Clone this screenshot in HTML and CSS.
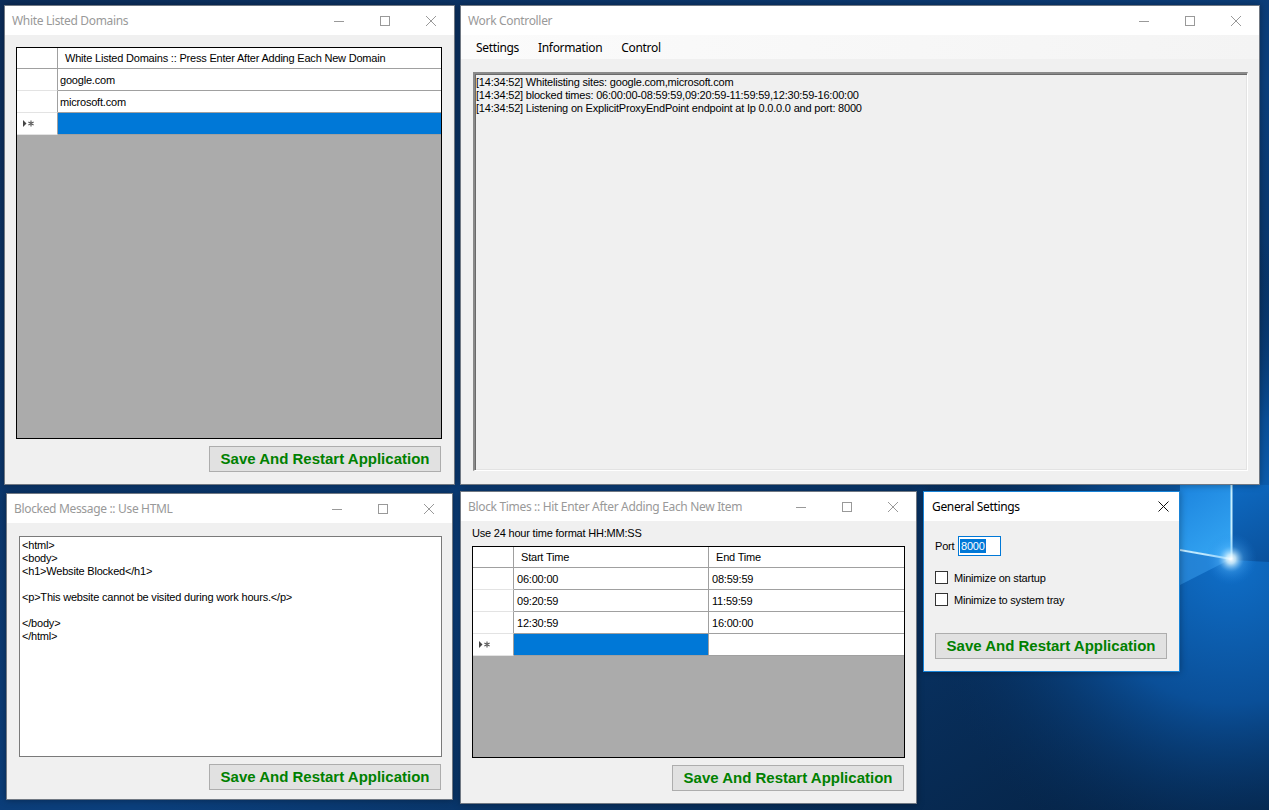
FILE: index.html
```html
<!DOCTYPE html>
<html lang="en">
<head>
<meta charset="utf-8">
<title>Work Controller</title>
<link rel="stylesheet" href="styles.css">
</head>
<body>
<div class="desktop">
  <svg class="wallpaper" width="1269" height="810" viewBox="0 0 1269 810" aria-hidden="true">
    <defs>
      <linearGradient id="bgbase" x1="0" y1="0" x2="1" y2="1">
        <stop offset="0" stop-color="#0c2d5a"/>
        <stop offset="0.55" stop-color="#0b3f7c"/>
        <stop offset="1" stop-color="#05203f"/>
      </linearGradient>
      <radialGradient id="bgglow" cx="1230" cy="560" r="320" gradientUnits="userSpaceOnUse">
        <stop offset="0" stop-color="#0f6fc9"/>
        <stop offset="0.45" stop-color="#0a4f98"/>
        <stop offset="1" stop-color="#062b58" stop-opacity="0"/>
      </radialGradient>
      <linearGradient id="pane1" x1="1180" y1="485" x2="1231" y2="559" gradientUnits="userSpaceOnUse">
        <stop offset="0" stop-color="#1c84de"/>
        <stop offset="1" stop-color="#36a8f4"/>
      </linearGradient>
      <linearGradient id="pane2" x1="1232" y1="485" x2="1269" y2="562" gradientUnits="userSpaceOnUse">
        <stop offset="0" stop-color="#0e6ac2"/>
        <stop offset="1" stop-color="#0a519c"/>
      </linearGradient>
      <radialGradient id="flare" cx="1231" cy="559" r="26" gradientUnits="userSpaceOnUse">
        <stop offset="0" stop-color="#ffffff"/>
        <stop offset="0.18" stop-color="#d6f3ff" stop-opacity="0.85"/>
        <stop offset="0.5" stop-color="#5ab8ff" stop-opacity="0.3"/>
        <stop offset="1" stop-color="#1a7fe0" stop-opacity="0"/>
      </radialGradient>
    </defs>
    <rect width="1269" height="810" fill="url(#bgbase)"/>
    <rect width="1269" height="810" fill="url(#bgglow)"/>
    <polygon points="1180,485 1231,485 1231,559 1180,549" fill="url(#pane1)"/>
    <polygon points="1232,485 1269,485 1269,562 1232,560" fill="url(#pane2)"/>
    <polygon points="1180,551 1231,559 1180,585" fill="#3a9ff0" opacity="0.5"/>
    <line x1="1231.5" y1="485" x2="1231.5" y2="559" stroke="#c8f0ff" stroke-width="2"/>
    <line x1="1180" y1="550" x2="1231" y2="559" stroke="#bfe9ff" stroke-width="2"/>
    <circle cx="1231" cy="559" r="26" fill="url(#flare)"/>
  </svg>

  <!-- White Listed Domains -->
  <section class="win w-domains">
    <header class="titlebar">
      <span class="title">White Listed Domains</span>
      <div class="caps">
        <span class="cap"><svg width="10" height="10" viewBox="0 0 10 10"><path d="M0 5.5H10" stroke="#999" shape-rendering="crispEdges"/></svg></span>
        <span class="cap"><svg width="10" height="10" viewBox="0 0 10 10"><rect x="0.5" y="0.5" width="9" height="9" fill="none" stroke="#999" shape-rendering="crispEdges"/></svg></span>
        <span class="cap"><svg width="10" height="10" viewBox="0 0 10 10"><path d="M0 0L10 10M10 0L0 10" stroke="#999"/></svg></span>
      </div>
    </header>
    <div class="client c-domains">
      <div class="dg">
        <div class="dg-row dg-head">
          <div class="dg-cell rh"></div>
          <div class="dg-cell col-fill hc">White Listed Domains :: Press Enter After Adding Each New Domain</div>
        </div>
        <div class="dg-row">
          <div class="dg-cell rh"></div>
          <div class="dg-cell col-fill">google.com</div>
        </div>
        <div class="dg-row">
          <div class="dg-cell rh"></div>
          <div class="dg-cell col-fill">microsoft.com</div>
        </div>
        <div class="dg-row">
          <div class="dg-cell rh newrow"><svg width="12" height="7" viewBox="0 0 12 7"><path d="M0 0L3.5 3.5L0 7Z" fill="#444"/><path d="M8 0.5V6.5M5.4 2L10.6 5M5.4 5L10.6 2" stroke="#555" stroke-width="1.1"/></svg></div>
          <div class="dg-cell col-fill sel"></div>
        </div>
      </div>
      <button class="btn" type="button">Save And Restart Application</button>
    </div>
  </section>

  <!-- Work Controller -->
  <section class="win w-controller">
    <header class="titlebar">
      <span class="title">Work Controller</span>
      <div class="caps">
        <span class="cap"><svg width="10" height="10" viewBox="0 0 10 10"><path d="M0 5.5H10" stroke="#999" shape-rendering="crispEdges"/></svg></span>
        <span class="cap"><svg width="10" height="10" viewBox="0 0 10 10"><rect x="0.5" y="0.5" width="9" height="9" fill="none" stroke="#999" shape-rendering="crispEdges"/></svg></span>
        <span class="cap"><svg width="10" height="10" viewBox="0 0 10 10"><path d="M0 0L10 10M10 0L0 10" stroke="#999"/></svg></span>
      </div>
    </header>
    <nav class="menubar">
      <span class="menu-item">Settings</span>
      <span class="menu-item">Information</span>
      <span class="menu-item">Control</span>
    </nav>
    <div class="client c-controller">
      <div class="logbox">
        <div>[14:34:52] Whitelisting sites: google.com,microsoft.com</div>
        <div>[14:34:52] blocked times: 06:00:00-08:59:59,09:20:59-11:59:59,12:30:59-16:00:00</div>
        <div>[14:34:52] Listening on ExplicitProxyEndPoint endpoint at Ip 0.0.0.0 and port: 8000</div>
      </div>
    </div>
  </section>

  <!-- Blocked Message -->
  <section class="win w-message">
    <header class="titlebar">
      <span class="title">Blocked Message :: Use HTML</span>
      <div class="caps">
        <span class="cap"><svg width="10" height="10" viewBox="0 0 10 10"><path d="M0 5.5H10" stroke="#999" shape-rendering="crispEdges"/></svg></span>
        <span class="cap"><svg width="10" height="10" viewBox="0 0 10 10"><rect x="0.5" y="0.5" width="9" height="9" fill="none" stroke="#999" shape-rendering="crispEdges"/></svg></span>
        <span class="cap"><svg width="10" height="10" viewBox="0 0 10 10"><path d="M0 0L10 10M10 0L0 10" stroke="#999"/></svg></span>
      </div>
    </header>
    <div class="client c-message">
      <div class="textbox">&lt;html&gt;
&lt;body&gt;
&lt;h1&gt;Website Blocked&lt;/h1&gt;

&lt;p&gt;This website cannot be visited during work hours.&lt;/p&gt;

&lt;/body&gt;
&lt;/html&gt;</div>
      <button class="btn" type="button">Save And Restart Application</button>
    </div>
  </section>

  <!-- Block Times -->
  <section class="win w-times">
    <header class="titlebar">
      <span class="title">Block Times :: Hit Enter After Adding Each New Item</span>
      <div class="caps">
        <span class="cap"><svg width="10" height="10" viewBox="0 0 10 10"><path d="M0 5.5H10" stroke="#999" shape-rendering="crispEdges"/></svg></span>
        <span class="cap"><svg width="10" height="10" viewBox="0 0 10 10"><rect x="0.5" y="0.5" width="9" height="9" fill="none" stroke="#999" shape-rendering="crispEdges"/></svg></span>
        <span class="cap"><svg width="10" height="10" viewBox="0 0 10 10"><path d="M0 0L10 10M10 0L0 10" stroke="#999"/></svg></span>
      </div>
    </header>
    <div class="client c-times">
      <div class="hint">Use 24 hour time format HH:MM:SS</div>
      <div class="dg">
        <div class="dg-row dg-head">
          <div class="dg-cell rh"></div>
          <div class="dg-cell col-start hc">Start Time</div>
          <div class="dg-cell col-fill hc">End Time</div>
        </div>
        <div class="dg-row">
          <div class="dg-cell rh"></div>
          <div class="dg-cell col-start">06:00:00</div>
          <div class="dg-cell col-fill">08:59:59</div>
        </div>
        <div class="dg-row">
          <div class="dg-cell rh"></div>
          <div class="dg-cell col-start">09:20:59</div>
          <div class="dg-cell col-fill">11:59:59</div>
        </div>
        <div class="dg-row">
          <div class="dg-cell rh"></div>
          <div class="dg-cell col-start">12:30:59</div>
          <div class="dg-cell col-fill">16:00:00</div>
        </div>
        <div class="dg-row">
          <div class="dg-cell rh newrow"><svg width="12" height="7" viewBox="0 0 12 7"><path d="M0 0L3.5 3.5L0 7Z" fill="#444"/><path d="M8 0.5V6.5M5.4 2L10.6 5M5.4 5L10.6 2" stroke="#555" stroke-width="1.1"/></svg></div>
          <div class="dg-cell col-start sel"></div>
          <div class="dg-cell col-fill"></div>
        </div>
      </div>
      <button class="btn" type="button">Save And Restart Application</button>
    </div>
  </section>

  <!-- General Settings -->
  <section class="win w-settings">
    <header class="titlebar">
      <span class="title title-active">General Settings</span>
      <div class="caps">
        <span class="cap cap-dialog"><svg width="11" height="11" viewBox="0 0 11 11"><path d="M0.5 0.5L10.5 10.5M10.5 0.5L0.5 10.5" stroke="#111"/></svg></span>
      </div>
    </header>
    <div class="client c-settings">
      <div class="port-row">
        <span class="lbl">Port</span>
        <span class="input"><span class="seltext">8000</span></span>
      </div>
      <div class="checks">
        <div class="check-row"><span class="chk"></span><span class="lbl">Minimize on startup</span></div>
        <div class="check-row"><span class="chk"></span><span class="lbl">Minimize to system tray</span></div>
      </div>
      <button class="btn" type="button">Save And Restart Application</button>
    </div>
  </section>
</div>
</body>
</html>
```

FILE: styles.css
```css
* { box-sizing: border-box; }
html, body { margin: 0; padding: 0; }
body {
  width: 1269px;
  height: 810px;
  overflow: hidden;
  font-family: "Liberation Sans", Arial, sans-serif;
  font-size: 11px;
  letter-spacing: -0.2px;
  color: #000;
  background: #0a3566;
}

.desktop {
  position: relative;
  width: 1269px;
  height: 810px;
  overflow: hidden;
}
.wallpaper { position: absolute; left: 0; top: 0; display: block; }

/* ---------- windows ---------- */
.win {
  position: absolute;
  display: flex;
  flex-direction: column;
  background: #f0f0f0;
  border: 1px solid rgba(70, 80, 95, 0.75);
  box-shadow: 0 0 7px rgba(0, 0, 0, 0.35);
}
.w-domains    { left: 4px;   top: 5px;   width: 451px; height: 480px; }
.w-controller { left: 460px; top: 5px;   width: 800px; height: 480px; }
.w-message    { left: 6px;   top: 493px; width: 447px; height: 307px; }
.w-times      { left: 460px; top: 491px; width: 457px; height: 313px; }
.w-settings   { left: 923px; top: 491px; width: 257px; height: 181px; border-color: #1883d7; }

.titlebar {
  height: 29px;
  flex: none;
  display: flex;
  align-items: center;
  background: #fff;
}
.title {
  flex: 1;
  padding-left: 7px;
  font-family: "Noto Sans", "Open Sans", sans-serif;
  font-size: 12px;
  letter-spacing: -0.33px;
  color: #999;
  white-space: nowrap;
  overflow: hidden;
}
.title-active { color: #000; padding-left: 8px; }
.caps { display: flex; height: 100%; }
.cap {
  width: 46px;
  height: 100%;
  display: flex;
  align-items: center;
  justify-content: center;
}
.cap svg { display: block; }
.cap-dialog { width: 31px; }

.client {
  flex: 1;
  min-height: 0;
  display: flex;
  flex-direction: column;
}

/* ---------- button ---------- */
.btn {
  flex: none;
  align-self: flex-end;
  width: 232px;
  height: 26px;
  margin: 7px 1px 0 0;
  padding: 0;
  background: #e1e1e1;
  border: 1px solid #adadad;
  font-family: "Liberation Sans", Arial, sans-serif;
  font-weight: bold;
  font-size: 15px;
  letter-spacing: 0;
  color: #008000;
  line-height: 24px;
  text-align: center;
}

/* ---------- data grid ---------- */
.dg {
  flex: 1;
  min-height: 0;
  display: flex;
  flex-direction: column;
  background: #ababab;
  border: 1px solid #000;
  overflow: hidden;
}
.dg-row {
  flex: none;
  display: flex;
  height: 22px;
}
.dg-head { height: 21px; }
.dg-cell {
  display: flex;
  align-items: center;
  background: #fff;
  border-right: 1px solid #a0a0a0;
  border-bottom: 1px solid #a0a0a0;
  padding-left: 2px;
  white-space: nowrap;
  overflow: hidden;
}
.dg-cell.hc { padding-left: 7px; }
.rh {
  flex: none;
  width: 41px;
  border-bottom-color: #e3e3e3;
}
.dg-head .rh { border-bottom-color: #a0a0a0; }
.newrow { padding-left: 6px; }
.newrow svg { display: block; }
.col-fill { flex: 1; border-right: none; }
.col-start { flex: none; width: 195px; padding-left: 3px; }
.c-times .col-fill { padding-left: 3px; }
.c-times .col-fill.hc, .c-times .col-start.hc { padding-left: 7px; }
.sel { background: #0078d7; }

/* ---------- White Listed Domains ---------- */
.c-domains { padding: 12px 12px 12px 11px; }

/* ---------- Work Controller ---------- */
.menubar {
  flex: none;
  height: 24px;
  display: flex;
  align-items: center;
  padding-left: 6px;
  gap: 1px;
  background: linear-gradient(to right, #fbfbfb, #f4f4f4);
  font-family: "Noto Sans", "Open Sans", sans-serif;
  font-size: 12px;
  letter-spacing: -0.33px;
}
.menu-item { padding: 0 9px; }
.c-controller { padding: 13px 11px 13px 12px; }
.logbox {
  flex: 1;
  background: #f0f0f0;
  border-style: solid;
  border-width: 2px 1px 1px 2px;
  border-color: #8a8a8a #fff #fff #8a8a8a;
  box-shadow: inset 1px 1px 0 #6a6a6a, inset -1px -1px 0 #e3e3e3;
  padding: 2px 1px;
  line-height: 13px;
  white-space: nowrap;
}

/* ---------- Blocked Message ---------- */
.c-message { padding: 13px 10px 9px 12px; }
.textbox {
  flex: 1;
  background: #fff;
  border: 1px solid #7a7a7a;
  padding: 2px 2px;
  line-height: 13px;
  white-space: pre;
}

/* ---------- Block Times ---------- */
.c-times { padding: 6px 11px 12px 11px; }
.hint {
  flex: none;
  height: 13px;
  line-height: 13px;
  margin: 0 0 6px 0;
}

/* ---------- General Settings ---------- */
.c-settings { padding: 15px 12px 12px 11px; }
.port-row {
  flex: none;
  display: flex;
  align-items: center;
  height: 20px;
}
.port-row .lbl { width: 23px; }
.input {
  width: 43px;
  height: 20px;
  border: 1px solid #0078d7;
  background: #fff;
  display: flex;
  align-items: center;
  padding-left: 1px;
}
.seltext {
  background: #0078d7;
  color: #fff;
  line-height: 14px;
  padding: 0 1px;
}
.checks {
  flex: none;
  display: flex;
  flex-direction: column;
  gap: 9px;
  margin-top: 15px;
}
.check-row {
  display: flex;
  align-items: center;
  height: 13px;
  gap: 6px;
}
.chk {
  width: 13px;
  height: 13px;
  border: 1px solid #333;
  background: #fff;
}
.c-settings .btn { margin-top: 27px; align-self: flex-start; }
```
